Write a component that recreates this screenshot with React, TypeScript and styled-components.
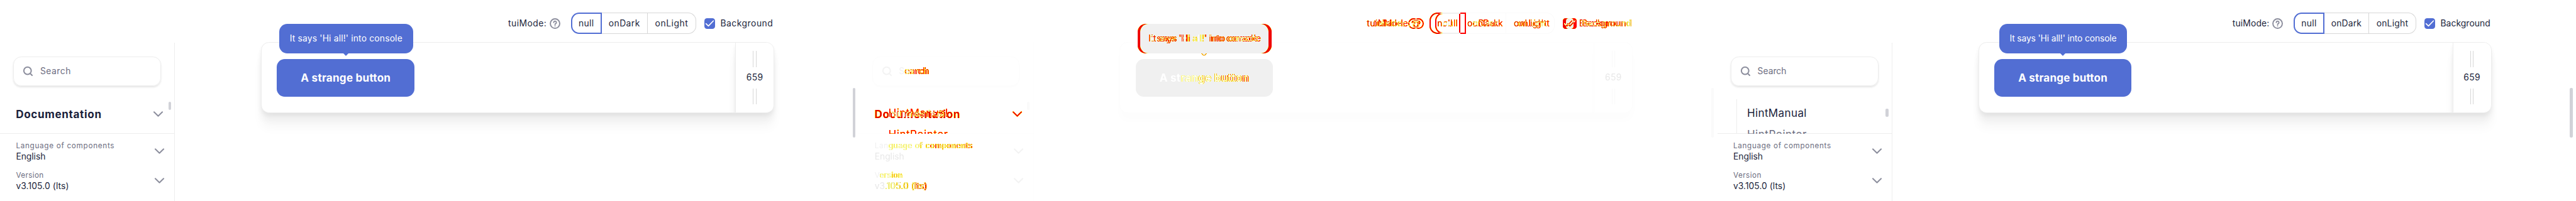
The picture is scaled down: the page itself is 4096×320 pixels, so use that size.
import React, { useLayoutEffect, useRef, useState } from "react";
import styled, { createGlobalStyle, css, ThemeProvider } from "styled-components";

/* One design unit is 16/15 of a pixel: a 1280x300 frame becomes 1365.33x320. */
const u = (n: number) => `${+((n * 16) / 15).toFixed(3)}px`;

const light = {
  paper: "#fff",
  ink: "#1b1f3b",
  muted: "#6c6d80",
  icon: "#8c8e9d",
  primary: "#526ed3",
  onPrimary: "#fff",
  line: "#ededed",
  group: "#d7d7d7",
  bars: "#d7d7d7",
  thumb: "#d1d2d8",
  pageThumb: "#d1d2d8",
  fieldShadow: "0 2px 3px rgba(0,0,0,.1)",
  cardShadow:
    "0 24px 16px rgba(0,0,0,.03), 0 12px 12px rgba(0,0,0,.04), 0 4px 6px rgba(0,0,0,.05)",
};

/* Pixels the frames have in common, washed out. */
const faint: typeof light = {
  paper: "#fff",
  ink: "#e8e8e8",
  muted: "#f1f1f1",
  icon: "#f3f3f3",
  primary: "#f0f0f0",
  onPrimary: "#fff",
  line: "#fdfdfd",
  group: "#fafafa",
  bars: "#fafafa",
  thumb: "#fafafa",
  pageThumb: "#fafafa",
  fieldShadow: "0 2px 3px rgba(0,0,0,.01)",
  cardShadow: "0 12px 14px rgba(0,0,0,.01)",
};

/* Masks are subtracted from each other: a shape in only one of them stays lit. */
const mask: typeof light = {
  paper: "#000",
  ink: "#fff",
  muted: "#fff",
  icon: "#fff",
  primary: "#fff",
  onPrimary: "#000",
  line: "#000",
  group: "#000",
  bars: "#000",
  thumb: "#000",
  pageThumb: "#000",
  fieldShadow: "none",
  cardShadow: "none",
};

type Tone = "ink" | "muted" | "icon" | "primary" | "onPrimary";

interface Frame {
  nav: "section" | "links";
  thumbTop: number;
  search: number;
  language: number;
  version: number;
  release: number;
  hintLeft: number;
  hintWidth: number;
  hintText: number;
  buttonWidth: number;
  buttonText: number;
  mode: number;
  cells: [string, number, number][];
  background: number;
}

const before: Frame = {
  nav: "section",
  thumbTop: 4,
  search: 46,
  language: 147,
  version: 41.5,
  release: 79,
  hintLeft: 27,
  hintWidth: 200,
  hintText: 168,
  buttonWidth: 205,
  buttonText: 134,
  mode: 57.5,
  cells: [
    ["null", 46, 23],
    ["onDark", 68.5, 47],
    ["onLight", 72.5, 49.5],
  ],
  background: 78.5,
};

const after: Frame = {
  nav: "links",
  thumbTop: 14,
  search: 43,
  language: 146,
  version: 42,
  release: 78,
  hintLeft: 31,
  hintWidth: 191,
  hintText: 159.5,
  buttonWidth: 204.3,
  buttonText: 133,
  mode: 55,
  cells: [
    ["null", 46, 23],
    ["onDark", 66.5, 45.5],
    ["onLight", 70.5, 47.5],
  ],
  background: 74.5,
};

const GlobalStyle = createGlobalStyle`
  *, *::before, *::after { box-sizing: border-box; }
  html, body { margin: 0; background: #fff; overflow: hidden; }
  body { font-family: Inter, "Liberation Sans", sans-serif; }
`;

const Strip = styled.main`
  display: flex;
  width: 4096px;
  height: 320px;
`;

const Screen = styled.section`
  display: flex;
  flex: none;
  width: ${u(1280)};
  height: ${u(300)};
  overflow: hidden;
  background: ${(p) => p.theme.paper};
  color: ${(p) => p.theme.ink};
`;

const Sidebar = styled.aside`
  flex: none;
  display: flex;
  flex-direction: column;
  width: ${u(261)};
  margin-top: ${u(64)};
  padding-top: ${u(20)};
  border-right: 1px solid ${(p) => p.theme.line};
`;

const SearchField = styled.div`
  flex: none;
  display: flex;
  align-items: center;
  gap: ${u(10)};
  height: ${u(44)};
  margin: 0 ${u(20)} ${u(20)};
  padding-left: ${u(13)};
  border: 1px solid ${(p) => p.theme.line};
  border-radius: ${u(12)};
  box-shadow: ${(p) => p.theme.fieldShadow};
`;

const Nav = styled.nav`
  flex: none;
  display: flex;
  height: ${u(52)};
  overflow: hidden;
  box-shadow: inset 0 -1px ${(p) => p.theme.line};
`;

const NavBody = styled.div`
  flex: 1;
`;

const SectionRow = styled.div`
  display: flex;
  align-items: center;
  justify-content: space-between;
  height: ${u(44)};
  padding: 0 ${u(7)} 0 ${u(23.6)};
`;

const Links = styled.div`
  margin-left: ${u(28)};
  padding: ${u(4)} 0 0 ${u(15.4)};
  border-left: 1px solid ${(p) => p.theme.line};
`;

const LinkRow = styled.div`
  display: flex;
  align-items: center;
  height: ${u(32)};
`;

const Track = styled.div<{ $top: number }>`
  flex: none;
  width: ${u(9)};
  padding-top: ${(p) => u(p.$top)};
`;

const Thumb = styled.div`
  width: ${u(4)};
  height: ${u(12)};
  border-radius: 2px;
  background: ${(p) => p.theme.thumb};
`;

const Settings = styled.div`
  padding: ${u(4)} ${u(14)} 0 ${u(23.8)};
`;

const SelectRow = styled.div`
  display: flex;
  align-items: center;
  justify-content: space-between;
  height: ${u(44)};
`;

const SelectText = styled.div`
  display: flex;
  flex-direction: column;
`;

const Glyphs = styled.span<{ $w: number; $size: number; $tone: Tone; $weight: number }>`
  display: block;
  flex: none;
  width: ${(p) => u(p.$w)};
  font-size: ${(p) => u(p.$size)};
  font-weight: ${(p) => p.$weight};
  line-height: ${u(16)};
  white-space: pre;
  color: ${(p) => p.theme[p.$tone]};
`;

const Main = styled.div`
  flex: 1;
  display: flex;
  flex-direction: column;
  padding-left: ${u(128)};
`;

const Toolbar = styled.div`
  display: flex;
  align-items: flex-start;
  justify-content: flex-end;
  height: ${u(63)};
  padding: ${u(19)} ${u(118.6)} 0 0;
`;

const ToolbarItem = styled.div<{ $gap: number; $before?: number }>`
  display: flex;
  align-items: center;
  gap: ${(p) => u(p.$gap)};
  height: ${u(32)};
  margin-left: ${(p) => u(p.$before ?? 0)};
`;

const Group = styled.div`
  display: flex;
  height: ${u(32)};
  margin-left: ${u(16)};
`;

const Cell = styled.div<{ $w: number; $active: boolean }>`
  display: flex;
  align-items: center;
  justify-content: center;
  width: ${(p) => u(p.$w)};
  border: 1px solid ${(p) => p.theme.group};
  border-left-width: 0;
  &:last-child {
    border-radius: 0 ${u(12)} ${u(12)} 0;
  }
  ${(p) =>
    p.$active &&
    css`
      border: 2px solid ${p.theme.primary};
      border-radius: ${u(12)} 0 0 ${u(12)};
    `}
`;

const CheckBox = styled.div`
  width: ${u(16)};
  height: ${u(16)};
  border-radius: ${u(4)};
  background: ${(p) => p.theme.primary};
  svg {
    display: block;
    width: 100%;
    height: 100%;
  }
`;

const Card = styled.div`
  position: relative;
  width: ${u(765)};
  height: ${u(106)};
  border: 1px solid ${(p) => p.theme.line};
  border-radius: ${u(12)};
  background: ${(p) => p.theme.paper};
  box-shadow: ${(p) => p.theme.cardShadow};
`;

const CardBody = styled.div`
  display: flex;
  justify-content: space-between;
  height: 100%;
  padding-left: ${u(23)};
  border-radius: ${u(11)};
  overflow: hidden;
`;

const Button = styled.div<{ $w: number }>`
  display: flex;
  align-items: center;
  justify-content: center;
  width: ${(p) => u(p.$w)};
  height: ${u(56)};
  margin-top: ${u(24)};
  border-radius: ${u(12)};
  background: ${(p) => p.theme.primary};
`;

const Handle = styled.div`
  display: flex;
  flex-direction: column;
  align-items: center;
  justify-content: space-between;
  width: ${u(57)};
  padding: ${u(12)} 0;
  border-left: 1px solid ${(p) => p.theme.line};
  background: ${(p) => p.theme.paper};
  box-shadow: ${(p) => p.theme.cardShadow};
`;

const Grip = styled.div`
  width: ${u(5)};
  height: ${u(24)};
  border: solid ${(p) => p.theme.bars};
  border-width: 0 1px;
`;

const Hint = styled.div<{ $left: number; $w: number }>`
  position: absolute;
  top: ${u(-28)};
  left: ${(p) => u(p.$left - 1)};
  display: flex;
  align-items: center;
  justify-content: center;
  width: ${(p) => u(p.$w)};
  height: ${u(44)};
  border-radius: ${u(12)};
  background: ${(p) => p.theme.primary};
  &::after {
    content: "";
    position: absolute;
    top: 100%;
    left: calc(50% - ${u(4.5)});
    border: solid transparent;
    border-width: ${u(4.4)} ${u(4.5)} 0;
    border-top-color: ${(p) => p.theme.primary};
  }
`;

const PageThumb = styled.div`
  flex: none;
  width: ${u(4)};
  height: ${u(74)};
  margin: ${u(131)} ${u(5)} 0 0;
  border-radius: 2px;
  background: ${(p) => p.theme.pageThumb};
`;

const Stroke = styled.svg<{ $tone: Tone; $weight: number }>`
  flex: none;
  width: ${u(16)};
  height: ${u(16)};
  fill: none;
  stroke: ${(p) => p.theme[p.$tone]};
  stroke-width: ${(p) => p.$weight};
  stroke-linecap: round;
  stroke-linejoin: round;
`;

/* The comparison stacks whole frames on one grid cell. */
const Stack = styled.div`
  display: grid;
  flex: none;
  width: ${u(1280)};
  background: #fff;
  isolation: isolate;
`;

const Changes = styled.div`
  grid-area: 1 / 1;
  display: grid;
  background: #000;
  isolation: isolate;
  filter: url(#edges);
`;

const Layer = styled.div<{ $blend: "difference" | "multiply" }>`
  grid-area: 1 / 1;
  mix-blend-mode: ${(p) => p.$blend};
`;

const Defs = styled.svg`
  position: absolute;
  width: 0;
  height: 0;
`;

interface TextProps {
  w: number;
  children: string;
  size?: number;
  tone?: Tone;
  weight?: number;
}

/* Tracks a line of text out so that it takes exactly the width given. */
function Text({ w, children, size = 13, tone = "ink", weight = 400 }: TextProps) {
  const ref = useRef<HTMLSpanElement>(null);
  const [spacing, setSpacing] = useState(0);
  useLayoutEffect(() => {
    const range = document.createRange();
    range.selectNodeContents(ref.current!);
    const natural = range.getBoundingClientRect().width;
    setSpacing(((w * 16) / 15 - natural) / children.length);
  }, [w, children]);
  return (
    <Glyphs ref={ref} $w={w} $size={size} $tone={tone} $weight={weight} style={{ letterSpacing: spacing }}>
      {children}
    </Glyphs>
  );
}

const Chevron = () => (
  <Stroke viewBox="0 0 16 16" $tone="icon" $weight={1.9}>
    <path d="M1.8 5 8 11l6.200-6" />
  </Stroke>
);

function Demo({ frame: f }: { frame: Frame }) {
  return (
    <Screen>
      <Sidebar>
        <SearchField>
          <Stroke viewBox="0 0 16 16" $tone="icon" $weight={1.9}>
            <circle cx="7.300" cy="7.200" r="5.500" />
            <path d="m11.300 11.300 2.800 2.800" />
          </Stroke>
          <Text w={f.search} tone="muted">Search</Text>
        </SearchField>
        <Nav>
          <NavBody>
            {f.nav === "section" ? (
              <SectionRow>
                <Text w={128} size={16} weight={700}>Documentation</Text>
                <Chevron />
              </SectionRow>
            ) : (
              <Links>
                <LinkRow>
                  <Text w={89} size={16}>HintManual</Text>
                </LinkRow>
                <LinkRow>
                  <Text w={89} size={16} tone="muted">HintPointer</Text>
                </LinkRow>
              </Links>
            )}
          </NavBody>
          <Track $top={f.thumbTop}>
            <Thumb />
          </Track>
        </Nav>
        <Settings>
          <SelectRow>
            <SelectText>
              <Text w={f.language} size={11} tone="muted">Language of components</Text>
              <Text w={44}>English</Text>
            </SelectText>
            <Chevron />
          </SelectRow>
          <SelectRow>
            <SelectText>
              <Text w={f.version} size={11} tone="muted">Version</Text>
              <Text w={f.release}>v3.105.0 (lts)</Text>
            </SelectText>
            <Chevron />
          </SelectRow>
        </Settings>
      </Sidebar>
      <Main>
        <Toolbar>
          <ToolbarItem $gap={4}>
            <Text w={f.mode}>tuiMode:</Text>
            <Stroke viewBox="0 0 16 16" $tone="icon" $weight={1.8}>
              <circle cx="8" cy="8" r="7" />
              <path d="M6 6.400a2 2 0 1 1 3 1.700c-.7.4-1 .7-1 1.200M8 11.500v.1" />
            </Stroke>
          </ToolbarItem>
          <Group>
            {f.cells.map(([name, w, text], i) => (
              <Cell key={name} $w={w} $active={i === 0}>
                <Text w={text}>{name}</Text>
              </Cell>
            ))}
          </Group>
          <ToolbarItem $gap={8} $before={12}>
            <CheckBox>
              <Stroke viewBox="0 0 16 16" $tone="onPrimary" $weight={1.6}>
                <path d="M2.400 8.200 6 11.600 13.400 4" />
              </Stroke>
            </CheckBox>
            <Text w={f.background}>Background</Text>
          </ToolbarItem>
        </Toolbar>
        <Card>
          <CardBody>
            <Button $w={f.buttonWidth}>
              <Text w={f.buttonText} size={16} weight={700} tone="onPrimary">A strange button</Text>
            </Button>
            <Handle>
              <Grip />
              <Text w={25}>659</Text>
              <Grip />
            </Handle>
          </CardBody>
          <Hint $left={f.hintLeft} $w={f.hintWidth}>
            <Text w={f.hintText} tone="onPrimary">It says 'Hi all!' into console</Text>
          </Hint>
        </Card>
      </Main>
      <PageThumb />
    </Screen>
  );
}

function Comparison() {
  return (
    <Stack>
      <Defs aria-hidden>
        <filter id="edges" x="0" y="0" width="1" height="1" colorInterpolationFilters="sRGB">
          <feComponentTransfer>
            <feFuncR type="table" tableValues="1 1" />
            <feFuncG type="table" tableValues="1 1 0.9 0.5 0.1 0" />
            <feFuncB type="table" tableValues="1 0.5 0.1 0 0 0" />
          </feComponentTransfer>
        </filter>
      </Defs>
      <Changes>
        <ThemeProvider theme={mask}>
          <Layer $blend="difference">
            <Demo frame={before} />
          </Layer>
          <Layer $blend="difference">
            <Demo frame={after} />
          </Layer>
        </ThemeProvider>
      </Changes>
      <ThemeProvider theme={faint}>
        <Layer $blend="multiply">
          <Demo frame={before} />
        </Layer>
      </ThemeProvider>
    </Stack>
  );
}

export default function App() {
  return (
    <Strip>
      <GlobalStyle />
      <ThemeProvider theme={light}>
        <Demo frame={before} />
      </ThemeProvider>
      <Comparison />
      <ThemeProvider theme={light}>
        <Demo frame={after} />
      </ThemeProvider>
    </Strip>
  );
}
